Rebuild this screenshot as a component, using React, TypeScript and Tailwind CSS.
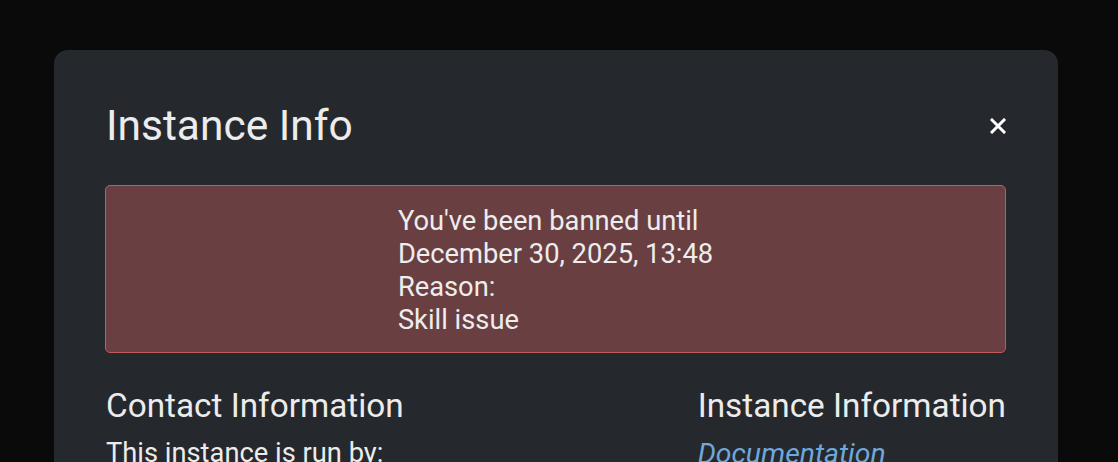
export default function App() {
  return (
    <div className="min-h-[462px] bg-[#0a0a0a] pt-[50px] pl-[54px] pr-[60px] font-['Roboto',sans-serif] text-[#ececec] overflow-hidden">
      <div className="w-[1004px] h-[500px] rounded-[14px] bg-[#25292e] pl-[51px] pr-[52px] pt-[48px]">
        {/* Header */}
        <div className="flex items-center justify-between pl-px">
          <h1 className="text-[42.5px] leading-[56px] font-normal">Instance Info</h1>
          <button className="text-white">
            <svg width="16" height="16" viewBox="0 0 16 16" fill="none" stroke="currentColor" strokeWidth="3" strokeLinecap="square">
              <path d="M2 2l12 12M14 2L2 14" />
            </svg>
          </button>
        </div>

        {/* Ban notice */}
        <div className="mt-[31px] h-[168px] rounded-[5px] border border-[#c35a5a] bg-[#6a3f42] flex items-center justify-center pt-[3px]">
          <div className="text-[27.3px] leading-[33px] text-[#ededed]">
            <div>You've been banned until</div>
            <div>December 30, 2025, 13:48</div>
            <div>Reason:</div>
            <div>Skill issue</div>
          </div>
        </div>

        {/* Info columns */}
        <div className="mt-[31px] flex justify-between pl-px">
          <div>
            <h2 className="text-[33.3px] leading-[44px]">Contact Information</h2>
            <p className="mt-[9px] text-[27.3px] leading-[33px]">This instance is run by:</p>
          </div>
          <div>
            <h2 className="text-[33.3px] leading-[44px]">Instance Information</h2>
            <a className="block mt-[9px] text-[28.4px] leading-[33px] italic text-[#6fa8dc]">Documentation</a>
          </div>
        </div>
      </div>
    </div>
  );
}
